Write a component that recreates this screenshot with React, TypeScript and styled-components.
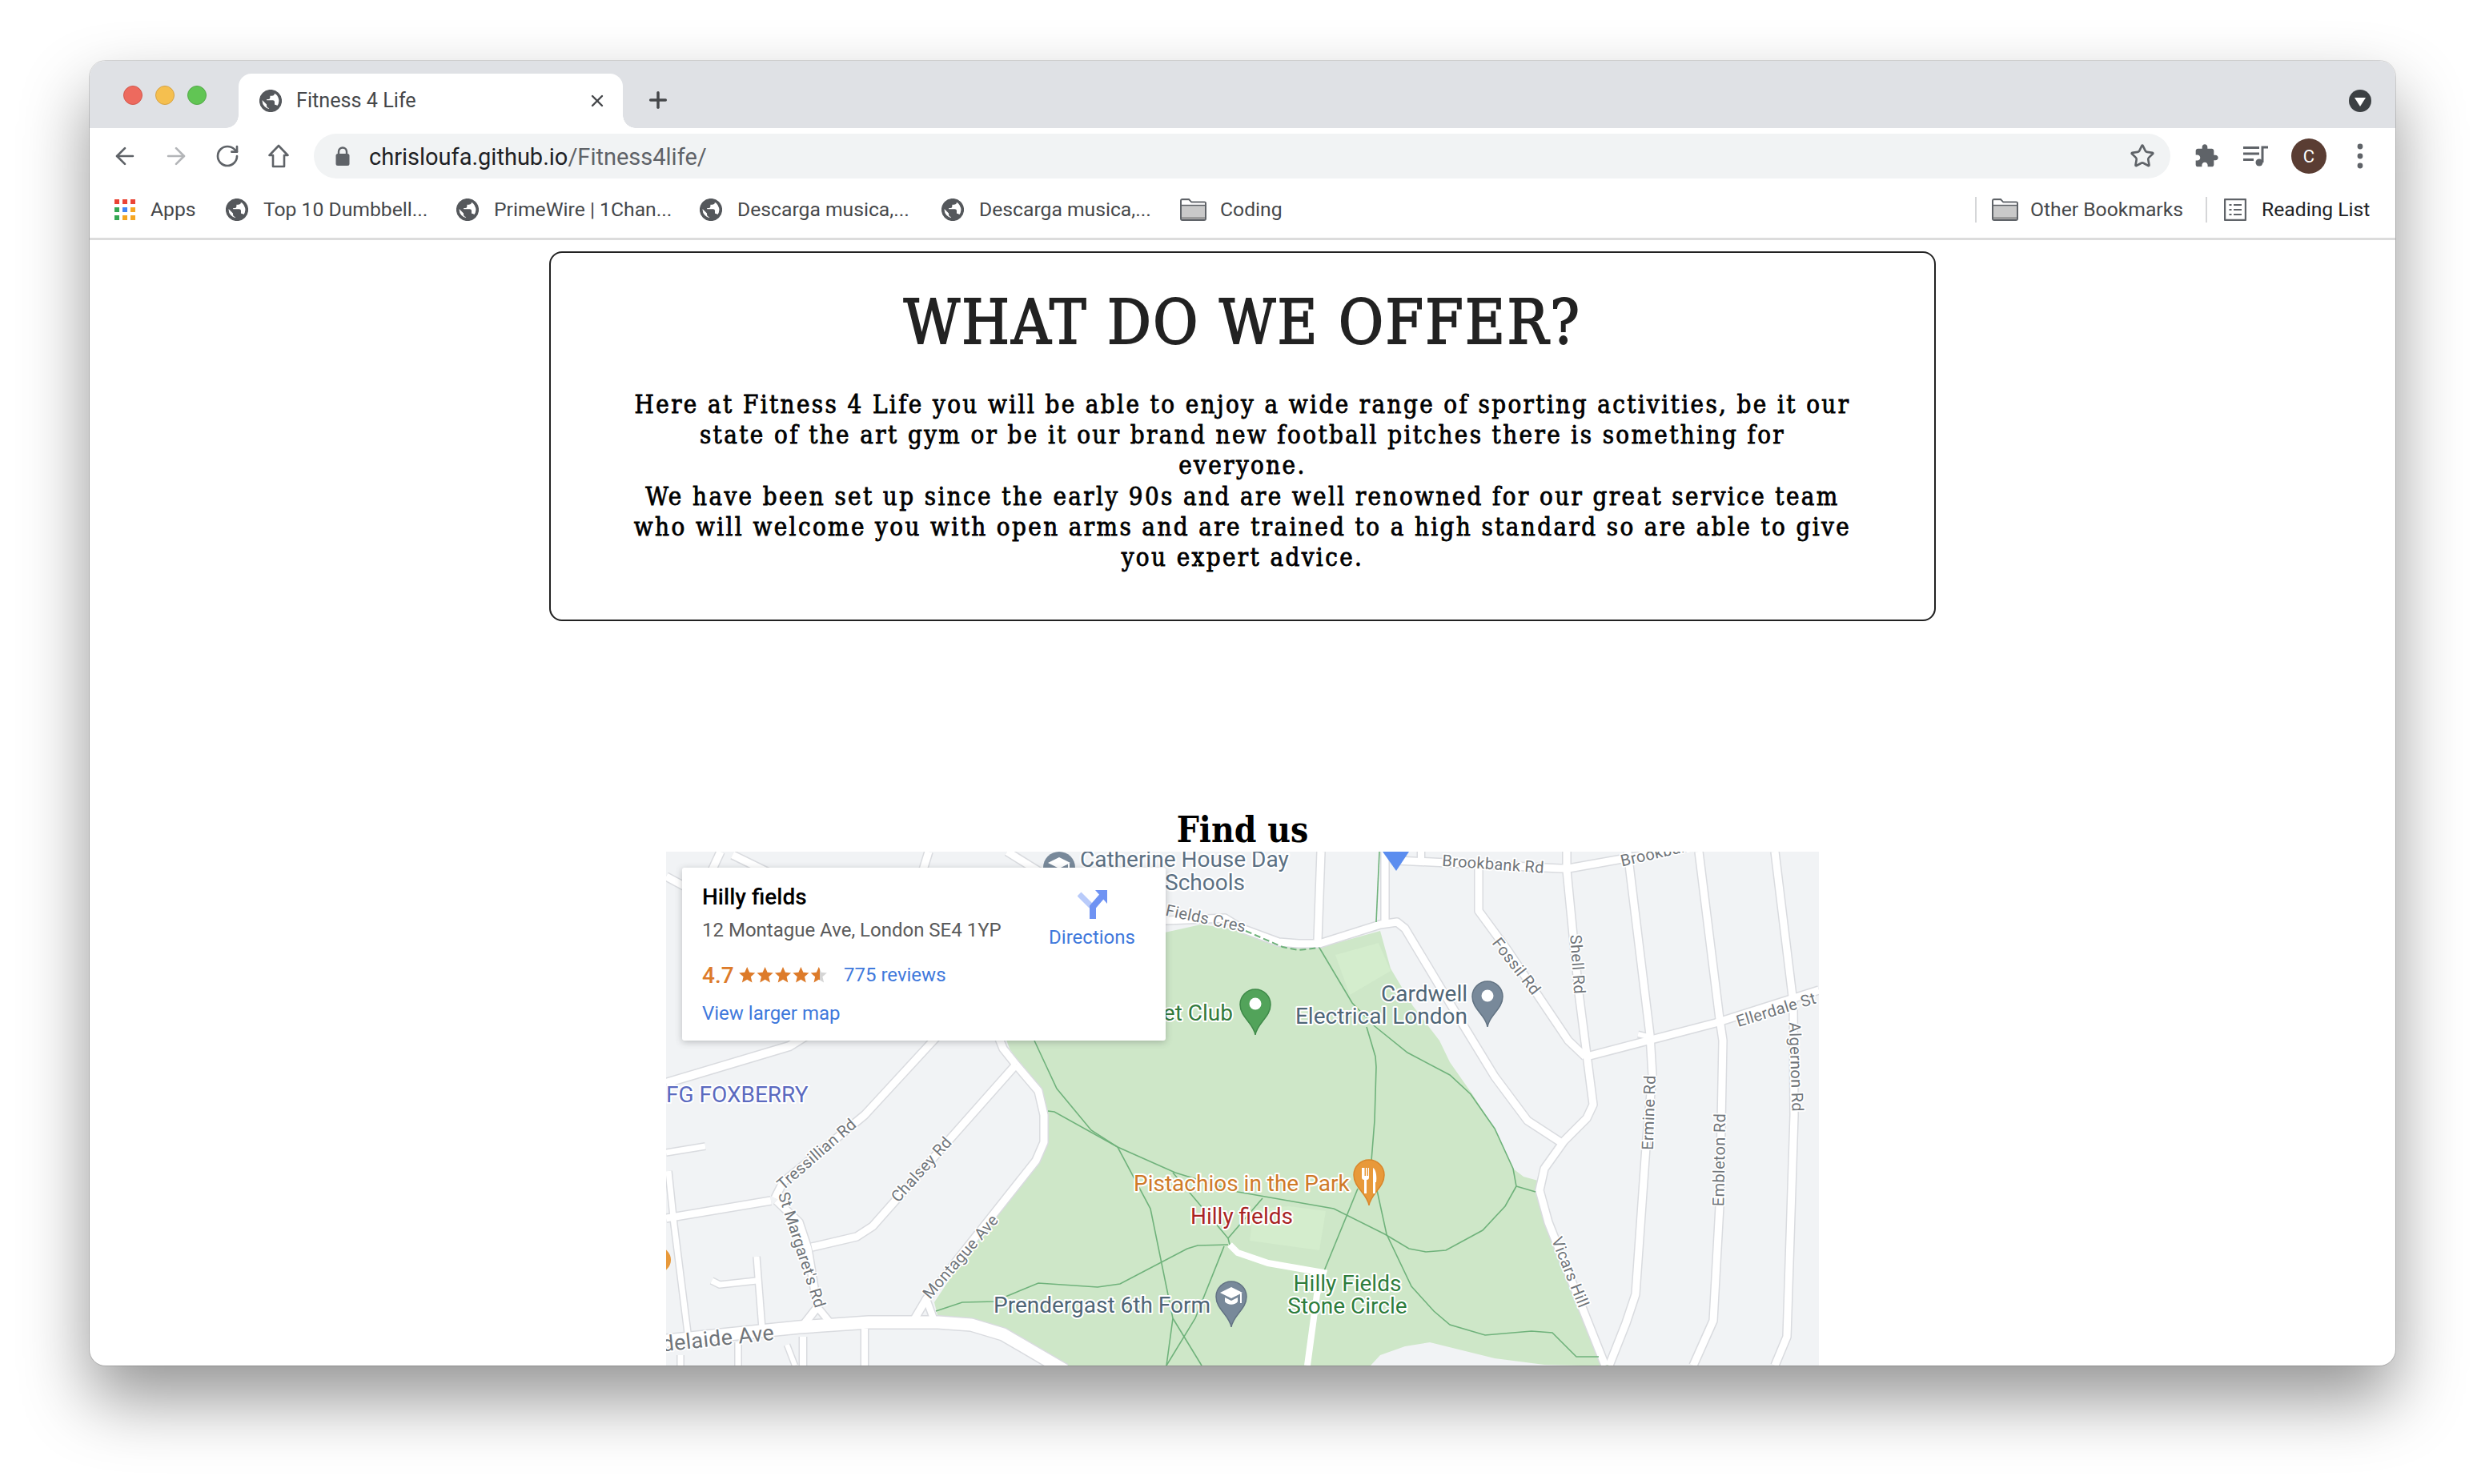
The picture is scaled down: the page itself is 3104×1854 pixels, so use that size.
import React from "react";
import styled, { createGlobalStyle } from "styled-components";
import { ArrowLeft, ArrowRight, RotateCw, Star, X, Plus } from "lucide-react";

const GlobalStyle = createGlobalStyle`
  html, body {
    margin: 0;
    padding: 0;
    background: #fff;
    width: 3104px;
    height: 1854px;
    overflow: hidden;
  }
  * { box-sizing: border-box; }
`;

const uiFont = `Roboto, "Liberation Sans", sans-serif`;
const slabFont = `"DejaVu Serif Condensed", "DejaVu Serif", serif`;

const Stage = styled.div`
  padding: 76px 0 0 112px;
`;

const BrowserWindow = styled.div`
  width: 2880px;
  height: 1630px;
  border-radius: 20px;
  overflow: hidden;
  background: #fff;
  display: flex;
  flex-direction: column;
  box-shadow: 0 0 0 1px rgba(0, 0, 0, 0.14), 0 42px 84px rgba(0, 0, 0, 0.42);
  font-family: ${uiFont};
`;

const TabStrip = styled.div`
  height: 84px;
  flex: none;
  background: #dfe1e5;
  display: flex;
  align-items: flex-end;
  padding-left: 42px;
  padding-right: 30px;
`;

const TrafficLights = styled.div`
  display: flex;
  gap: 16px;
  align-self: flex-start;
  margin-top: 31px;
  width: 144px;
`;

const Light = styled.span<{ $color: string; $edge: string }>`
  width: 24px;
  height: 24px;
  border-radius: 50%;
  background: ${(p) => p.$color};
  border: 1px solid ${(p) => p.$edge};
`;

const Tab = styled.div`
  position: relative;
  width: 480px;
  height: 68px;
  background: #fff;
  border-radius: 16px 16px 0 0;
  display: flex;
  align-items: center;
  padding: 0 20px 0 26px;
  gap: 18px;
  color: #45474a;
  font-size: 25.2px;

  &::before,
  &::after {
    content: "";
    position: absolute;
    bottom: 0;
    width: 16px;
    height: 16px;
  }
  &::before {
    left: -16px;
    background: radial-gradient(circle at 0 0, #dfe1e5 15.5px, #fff 16px);
  }
  &::after {
    right: -16px;
    background: radial-gradient(circle at 100% 0, #dfe1e5 15.5px, #fff 16px);
  }
`;

const TabTitle = styled.span`
  flex: 1;
  padding-bottom: 2px;
  white-space: nowrap;
`;

const NewTab = styled.div`
  display: flex;
  align-self: flex-start;
  margin: 33px 0 0 28px;
  color: #45474a;
`;

const StripEnd = styled.div`
  margin-left: auto;
  align-self: flex-start;
  margin-top: 36px;
  width: 28px;
  height: 28px;
  border-radius: 50%;
  background: #3c4043;
  display: flex;
  align-items: center;
  justify-content: center;

  &::after {
    content: "";
    border-left: 7px solid transparent;
    border-right: 7px solid transparent;
    border-top: 11px solid #fff;
    margin-top: 3px;
  }
`;

const Toolbar = styled.div`
  height: 76px;
  flex: none;
  display: flex;
  align-items: center;
  padding: 0 0 6px 12px;
`;

const NavIcon = styled.div<{ $color?: string; $width?: number }>`
  width: ${(p) => p.$width ?? 64}px;
  display: flex;
  justify-content: center;
  color: ${(p) => p.$color ?? "#5f6368"};
  flex: none;
`;

const Omnibox = styled.div`
  margin-left: 12px;
  width: 2319px;
  flex: none;
  height: 56px;
  border-radius: 28px;
  background: #f1f3f4;
  display: flex;
  align-items: center;
  padding: 0 19px 0 27px;
  font-size: 29px;
  color: #202124;
`;

const UrlText = styled.span`
  margin-left: 24px;
  flex: 1;
  white-space: nowrap;
  padding-top: 2px;
`;

const UrlPath = styled.span`
  color: #5f6368;
`;

const ToolIcons = styled.div`
  display: flex;
  align-items: center;
  margin-left: 14px;
`;

const Avatar = styled.div`
  width: 44px;
  height: 44px;
  border-radius: 50%;
  background: #5a3d33;
  color: #fff;
  font-size: 22px;
  display: flex;
  align-items: center;
  justify-content: center;
  margin: 0 20px 0 13px;
`;

const BookmarkBar = styled.div`
  height: 64px;
  flex: none;
  padding: 0 24px 10px 31px;
  display: flex;
  align-items: center;
  border-bottom: 3px solid #dcdcdc;
  font-size: 24.7px;
  color: #45474a;
`;

const Bookmark = styled.div<{ $width: number; $gap?: number; $inset?: number; $dark?: boolean }>`
  width: ${(p) => p.$width}px;
  flex: none;
  display: flex;
  align-items: center;
  gap: ${(p) => p.$gap ?? 17}px;
  padding-left: ${(p) => p.$inset ?? 0}px;
  white-space: nowrap;
  color: ${(p) => (p.$dark ? "#202124" : "inherit")};
`;

const BarDivider = styled.span`
  width: 2px;
  height: 32px;
  background: #d5d6d8;
  flex: none;
`;

const Push = styled.div`
  flex: 1;
`;

const PageArea = styled.main`
  flex: 1;
  min-height: 0;
  display: flex;
  flex-direction: column;
  align-items: center;
  padding-top: 14px;
`;

const OfferCard = styled.section`
  width: 1732px;
  height: 462px;
  flex: none;
  border: 2px solid #222;
  border-radius: 16px;
  text-align: center;
  font-family: ${slabFont};
`;

const OfferTitle = styled.h2`
  margin: 42px 0 0;
  font-size: 76px;
  line-height: 90px;
  font-weight: 400;
  color: #222;
  letter-spacing: 2.4px;
  -webkit-text-stroke: 1.8px #222;
`;

const OfferText = styled.p`
  margin: 38px 0 0;
  font-size: 31px;
  line-height: 38.2px;
  color: #000;
  letter-spacing: 2.4px;
  white-space: nowrap;
  -webkit-text-stroke: 0.8px #000;
`;

const FindHeading = styled.h2`
  margin: 234px 0 0;
  height: 54px;
  flex: none;
  font-family: ${slabFont};
  font-size: 44px;
  line-height: 54px;
  font-weight: 700;
  color: #000;
`;

const MapFrame = styled.div`
  position: relative;
  width: 1440px;
  flex: 1;
  min-height: 0;
  overflow: hidden;
  background: #f1f3f5;
`;

const MapDrawing = styled.svg`
  display: block;
  width: 1440px;
  height: 642px;
  font-family: ${uiFont};
`;

const PlaceLabel = styled.text<{ $color: string }>`
  fill: ${(p) => p.$color};
  font-size: 28px;
  stroke: #fff;
  stroke-width: 4px;
  stroke-linejoin: round;
  paint-order: stroke;
`;

const RoadText = styled.text<{ $size?: number }>`
  fill: #70757a;
  font-size: ${(p) => p.$size ?? 20}px;
  stroke: #fff;
  stroke-width: 3.5px;
  stroke-linejoin: round;
  paint-order: stroke;
  letter-spacing: 0.3px;
`;

const InfoCard = styled.div`
  position: absolute;
  left: 20px;
  top: 20px;
  width: 604px;
  height: 216px;
  background: #fff;
  border-radius: 3px;
  box-shadow: 0 2px 8px rgba(60, 64, 67, 0.3);
  display: flex;
  padding: 20px 20px 0 25px;
`;

const InfoMain = styled.div`
  flex: 1;
  display: flex;
  flex-direction: column;
`;

const PlaceName = styled.div`
  font-size: 28px;
  line-height: 34px;
  font-weight: 500;
  color: #000;
`;

const PlaceAddress = styled.div`
  margin-top: 9px;
  font-size: 24px;
  line-height: 30px;
  color: #5b5b5b;
`;

const RatingRow = styled.div`
  margin-top: 24px;
  display: flex;
  align-items: center;
  height: 34px;
`;

const RatingValue = styled.span`
  font-size: 28px;
  font-weight: 500;
  color: #dd7b2a;
  width: 45px;
`;

const ReviewsLink = styled.a`
  margin-left: 21px;
  font-size: 24px;
  color: #3f79dc;
`;

const LargerLink = styled.a`
  margin-top: 16px;
  font-size: 24px;
  line-height: 30px;
  color: #3f79dc;
`;

const DirectionsBox = styled.div`
  width: 146px;
  display: flex;
  flex-direction: column;
  align-items: center;
  padding-top: 8px;
  gap: 9px;
  font-size: 24px;
  color: #3f79dc;
  margin-right: -1px;
`;

type Pt = [number, number];

const toPath = (pts: Pt[]) => "M" + pts.map((p) => p.join(" ")).join("L");

const roads: { pts: Pt[]; w: number }[] = [
  { pts: [[1440, 1140], [1456, 1150], [1530, 1147], [1551, 1160], [1597, 1177], [1622, 1179], [1648, 1179], [1724, 1155], [1745, 1152], [1755, 1160], [1806, 1245], [1867, 1345], [1908, 1400], [1954, 1430]], w: 9 },
  { pts: [[1650, 1064], [1646, 1175]], w: 9 },
  { pts: [[1730, 1064], [1730, 1152]], w: 9 },
  { pts: [[1745, 1075], [1949, 1085], [1959, 1085], [2122, 1056]], w: 9 },
  { pts: [[1775, 1064], [1775, 1078]], w: 8 },
  { pts: [[1957, 1064], [1957, 1087], [1972, 1240], [1990, 1380], [1982, 1397], [1954, 1425], [1929, 1460], [1923, 1487], [1934, 1527], [2005, 1706]], w: 9 },
  { pts: [[2033, 1064], [2061, 1293], [2064, 1343], [2056, 1433], [2043, 1617], [2031, 1653], [2010, 1706]], w: 9 },
  { pts: [[2122, 1064], [2148, 1273], [2152, 1300], [2148, 1507], [2140, 1650], [2115, 1706]], w: 9 },
  { pts: [[2217, 1064], [2240, 1253], [2241, 1393], [2232, 1670], [2217, 1706]], w: 9 },
  { pts: [[1847, 1083], [1847, 1138], [1883, 1187], [1959, 1300], [1980, 1320]], w: 9 },
  { pts: [[1982, 1320], [2143, 1278], [2272, 1237]], w: 9 },
  { pts: [[2046, 1292], [2059, 1295]], w: 6 },
  { pts: [[900, 1064], [888, 1090]], w: 9 },
  { pts: [[915, 1068], [960, 1090]], w: 9 },
  { pts: [[1160, 1064], [1152, 1090]], w: 9 },
  { pts: [[1258, 1064], [1300, 1090]], w: 9 },
  { pts: [[832, 1095], [860, 1110]], w: 9 },
  { pts: [[832, 1353], [986, 1307], [1010, 1292]], w: 10 },
  { pts: [[968, 1497], [978, 1477], [1080, 1393], [1175, 1290]], w: 9 },
  { pts: [[832, 1522], [963, 1500]], w: 9 },
  { pts: [[1014, 1558], [1070, 1545], [1090, 1532], [1269, 1330]], w: 9 },
  { pts: [[1245, 1290], [1253, 1310], [1269, 1330], [1297, 1363], [1304, 1393], [1304, 1427], [1294, 1450], [1157, 1623], [1141, 1650]], w: 9 },
  { pts: [[1157, 1623], [1167, 1650]], w: 8 },
  { pts: [[970, 1500], [998, 1527], [1009, 1560], [1021, 1633], [1003, 1656]], w: 9 },
  { pts: [[1021, 1633], [1039, 1655]], w: 8 },
  { pts: [[835, 1463], [842, 1530], [860, 1673]], w: 7 },
  { pts: [[945, 1570], [952, 1660]], w: 7 },
  { pts: [[889, 1600], [899, 1605], [945, 1600]], w: 7 },
  { pts: [[832, 1440], [881, 1432]], w: 7 },
  { pts: [[1003, 1670], [1003, 1706]], w: 8 },
  { pts: [[1080, 1660], [1080, 1706]], w: 8 },
  { pts: [[922, 1677], [922, 1706]], w: 7 },
  { pts: [[850, 1693], [850, 1706]], w: 7 },
  { pts: [[983, 1680], [993, 1706]], w: 6 },
  { pts: [[832, 1675], [998, 1658], [1085, 1652], [1172, 1652], [1213, 1655], [1253, 1667], [1330, 1712]], w: 15 },
];

const parkPaths: Pt[][] = [
  [[1292, 1300], [1320, 1360], [1363, 1412], [1396, 1433], [1437, 1510], [1465, 1647], [1457, 1706]],
  [[1309, 1388], [1317, 1389], [1396, 1433], [1468, 1465], [1546, 1489], [1666, 1510], [1730, 1542], [1760, 1560], [1781, 1564], [1806, 1562], [1852, 1537], [1880, 1507], [1894, 1482], [1890, 1460], [1867, 1410], [1837, 1367], [1811, 1343], [1758, 1315], [1717, 1282], [1689, 1253], [1648, 1184]],
  [[1707, 1283], [1718, 1320], [1719, 1333], [1717, 1400], [1713, 1450]],
  [[1720, 1487], [1732, 1542], [1763, 1607], [1791, 1638], [1811, 1655], [1855, 1668], [1913, 1663], [1939, 1665], [1969, 1695], [1997, 1695]],
  [[1696, 1485], [1653, 1590]],
  [[1894, 1482], [1918, 1489]],
  [[1465, 1647], [1501, 1706]],
  [[1529, 1557], [1493, 1647], [1457, 1706]],
  [[1169, 1638], [1202, 1627], [1243, 1626], [1256, 1620], [1297, 1603], [1371, 1608], [1399, 1604], [1483, 1560], [1496, 1556], [1534, 1555]],
  [[1465, 1465], [1534, 1547], [1536, 1555]],
  [[1577, 1497], [1534, 1547]],
  [[1723, 1064], [1719, 1152]],
];

const parkOutline: Pt[] = [
  [1455, 1165], [1500, 1155], [1556, 1163], [1602, 1183], [1648, 1184], [1724, 1163], [1737, 1210], [1765, 1257], [1798, 1300], [1811, 1327], [1839, 1367], [1867, 1410], [1890, 1460], [1903, 1470], [1921, 1475], [1918, 1490], [1934, 1530], [2000, 1693], [2010, 1706],
  [1974, 1706], [1929, 1705], [1867, 1697], [1786, 1677], [1755, 1682], [1724, 1693], [1712, 1706],
  [1325, 1706], [1253, 1662], [1213, 1648], [1172, 1647], [1167, 1627], [1243, 1513], [1299, 1447], [1309, 1423], [1309, 1393], [1292, 1357], [1261, 1310], [1250, 1280], [1300, 1200],
];

const GlobeIcon = () => (
  <svg width="28" height="28" viewBox="0 0 16 16">
    <path
      fill="#55585c"
      stroke="#55585c"
      strokeWidth="0.9"
      fillRule="evenodd"
      d="M8 .4a7.6 7.6 0 1 0 0 15.2A7.6 7.6 0 0 0 8 .4zM7.2 14.3A6.4 6.4 0 0 1 1.6 8c0-.5.06-.97.17-1.43L5.6 10.4v.8c0 .88.72 1.6 1.6 1.6v1.5zm5.5-2a1.6 1.6 0 0 0-1.5-1.1h-.8V8.8a.8.8 0 0 0-.8-.8H4.8V6.4h1.6a.8.8 0 0 0 .8-.8V4h1.6c.88 0 1.6-.72 1.6-1.6v-.33a6.4 6.4 0 0 1 2.3 10.23z"
    />
  </svg>
);

const FolderIcon = () => (
  <svg width="33" height="28" viewBox="0 0 33 28">
    <path d="M1 5V25a2 2 0 0 0 2 2H30a2 2 0 0 0 2-2V6a1.5 1.5 0 0 0-1.5-1.5H14L11 1H3a2 2 0 0 0-2 2z" fill="#c9c9c9" stroke="#5f6368" strokeWidth="2" />
    <path d="M2 2.5h9l3 3h17v3H2z" fill="#fff" />
    <path d="M2 8.5h29" stroke="#5f6368" strokeWidth="1.5" />
    <path d="M2 23h29v3H2z" fill="#9b9b9b" />
  </svg>
);

const AppsIcon = () => {
  const colors = ["#ea4335", "#ea4335", "#ea4335", "#34a853", "#4285f4", "#f5a623", "#34a853", "#f5a623", "#f5a623"];
  return (
    <svg width="26" height="26" viewBox="0 0 26 26">
      {colors.map((c, i) => (
        <rect key={i} x={(i % 3) * 10} y={Math.floor(i / 3) * 10} width="6" height="6" fill={c} />
      ))}
    </svg>
  );
};

const ListIcon = () => (
  <svg width="28" height="28" viewBox="0 0 28 28" fill="none" stroke="#5f6368" strokeWidth="2">
    <rect x="1" y="1" width="26" height="26" rx="1" strokeWidth="2.4" />
    <path d="M6.5 8h3M12 8h10M6.5 14h3M12 14h10M6.5 20h3M12 20h10" strokeWidth="2" />
  </svg>
);

const HomeIcon = () => (
  <svg width="28" height="32" viewBox="0 0 28 32" fill="none" stroke="#5f6368" strokeWidth="2.6">
    <path d="M14 3L2.5 15H7V29H21V15H25.5z" strokeLinejoin="round" />
  </svg>
);

const LockIcon = () => (
  <svg width="18" height="24" viewBox="0 0 18 24">
    <path d="M4 10V6.5a5 5 0 0 1 10 0V10" fill="none" stroke="#5f6368" strokeWidth="2.4" />
    <rect x="0.5" y="9" width="17" height="15" rx="2.5" fill="#5f6368" />
  </svg>
);

const PuzzleIcon = () => (
  <svg width="32" height="32" viewBox="0 0 24 24" fill="#5f6368">
    <path d="M20.5 11H19V7c0-1.1-.9-2-2-2h-4V3.5C13 2.12 11.88 1 10.5 1S8 2.12 8 3.5V5H4c-1.1 0-1.99.9-1.99 2v3.8H3.5c1.49 0 2.7 1.21 2.7 2.7s-1.21 2.7-2.7 2.7H2V20c0 1.1.9 2 2 2h3.8v-1.5c0-1.49 1.21-2.7 2.7-2.7 1.49 0 2.7 1.21 2.7 2.7V22H17c1.1 0 2-.9 2-2v-4h1.5c1.38 0 2.5-1.12 2.5-2.5S21.88 11 20.5 11z" />
  </svg>
);

const MediaIcon = () => (
  <svg width="32" height="26" viewBox="0 0 32 26" fill="none" stroke="#5f6368" strokeWidth="3">
    <path d="M0 2.5H20M0 10H20M0 17.5H13M24 21V2H31" />
    <circle cx="20" cy="21" r="4.5" fill="#5f6368" stroke="none" />
  </svg>
);

const MoreIcon = () => (
  <svg width="8" height="36" viewBox="0 0 8 36" fill="#5f6368">
    <circle cx="4" cy="6" r="3.4" />
    <circle cx="4" cy="18" r="3.4" />
    <circle cx="4" cy="30" r="3.4" />
  </svg>
);

const DirectionsIcon = () => (
  <svg width="37" height="36" viewBox="0 0 37 36">
    <path d="M2 5L17 20" stroke="#b9cbfa" strokeWidth="7" fill="none" />
    <path d="M19 36V21L31 7" stroke="#6f93f3" strokeWidth="8" fill="none" />
    <path d="M22 0H37V17z" fill="#6f93f3" />
  </svg>
);

const starPoints = "8 0.8 10.1 5.6 15.2 6.1 11.3 9.5 12.5 14.6 8 12 3.5 14.6 4.7 9.5 0.8 6.1 5.9 5.6";

const RatingStars = () => (
  <svg width="111" height="22" viewBox="0 0 111 22">
    <defs>
      <linearGradient id="partStar">
        <stop offset="58%" stopColor="#dd7b2a" />
        <stop offset="58%" stopColor="#d5d5d5" />
      </linearGradient>
    </defs>
    {[0, 1, 2, 3, 4].map((i) => (
      <g key={i} transform={`translate(${i * 22.4} 0) scale(1.4)`}>
        <polygon points={starPoints} fill={i === 4 ? "url(#partStar)" : "#dd7b2a"} />
      </g>
    ))}
  </svg>
);

const Pin = ({ x, y, color, edge, children }: { x: number; y: number; color: string; edge: string; children?: React.ReactNode }) => (
  <g transform={`translate(${x} ${y})`}>
    <path d="M0 57C-2 42 -19 35 -19 19A19 19 0 1 1 19 19C19 35 2 42 0 57Z" fill={color} stroke={edge} strokeWidth="1.5" />
    {children}
  </g>
);

const CapGlyph = () => (
  <g fill="#fff">
    <path d="M0 7L14 14L0 21L-14 14Z" />
    <path d="M-8 20V25C-5 30 5 30 8 25V20L0 24Z" />
    <path d="M11 15h2v12h-2z" />
  </g>
);

const RoadLabel = ({ x, y, rot, size, children }: { x: number; y: number; rot: number; size?: number; children: string }) => (
  <RoadText $size={size} textAnchor="middle" dominantBaseline="middle" transform={`translate(${x} ${y}) rotate(${rot})`}>
    {children}
  </RoadText>
);

const MapArt = () => (
  <MapDrawing viewBox="832 1064 1440 642">
    <rect x="832" y="1064" width="1440" height="642" fill="#f1f3f5" />
    <polygon points={parkOutline.map((p) => p.join(",")).join(" ")} fill="#cee7c8" />
    <polygon points="1668,1193 1722,1178 1737,1213 1686,1243" fill="#d4edcd" />
    <polygon points="1610,1507 1656,1513 1648,1562 1561,1550 1566,1510" fill="#d4edcd" />

    {roads.map((r, i) => (
      <path key={i} d={toPath(r.pts)} fill="none" stroke="#d9dbdf" strokeWidth={r.w + 3} strokeLinejoin="round" />
    ))}
    {roads.map((r, i) => (
      <path key={i} d={toPath(r.pts)} fill="none" stroke="#fff" strokeWidth={r.w} strokeLinejoin="round" />
    ))}

    {parkPaths.map((pts, i) => (
      <path key={i} d={toPath(pts)} fill="none" stroke="#6fb27b" strokeWidth="1.6" />
    ))}
    <path d="M1556 1163L1602 1183L1622 1187L1648 1184" fill="none" stroke="#6fb27b" strokeWidth="2" strokeDasharray="8 4" />
    <path d="M1536 1555L1546 1565L1584 1578L1653 1590L1645 1617L1633 1706" fill="none" stroke="#fff" strokeWidth="8" />

    <RoadLabel x={1865} y={1081} rot={4}>Brookbank Rd</RoadLabel>
    <RoadLabel x={2087} y={1063} rot={-13}>Brookbank Rd</RoadLabel>
    <RoadLabel x={1506} y={1149} rot={12}>Fields Cres</RoadLabel>
    <RoadLabel x={1893} y={1208} rot={52}>Fossil Rd</RoadLabel>
    <RoadLabel x={1969} y={1205} rot={86}>Shell Rd</RoadLabel>
    <RoadLabel x={2219} y={1263} rot={-17}>Ellerdale St</RoadLabel>
    <RoadLabel x={2242} y={1333} rot={88}>Algernon Rd</RoadLabel>
    <RoadLabel x={2061} y={1390} rot={-88}>Ermine Rd</RoadLabel>
    <RoadLabel x={2149} y={1449} rot={-89}>Embleton Rd</RoadLabel>
    <RoadLabel x={1960} y={1590} rot={68}>Vicars Hill</RoadLabel>
    <RoadLabel x={1021} y={1443} rot={-41}>Tressillian Rd</RoadLabel>
    <RoadLabel x={1152} y={1462} rot={-48}>Chalsey Rd</RoadLabel>
    <RoadLabel x={1000} y={1562} rot={72}>St Margaret's Rd</RoadLabel>
    <RoadLabel x={1201} y={1571} rot={-49}>Montague Ave</RoadLabel>
    <RoadLabel x={888} y={1675} rot={-6} size={27}>Adelaide Ave</RoadLabel>

    <circle cx="1323" cy="1084" r="20" fill="#78899a" />
    <g transform="translate(1323 1064)"><CapGlyph /></g>
    <PlaceLabel $color="#5b7083" x="1349" y="1083">Catherine House Day</PlaceLabel>
    <PlaceLabel $color="#5b7083" x="1505" y="1112" textAnchor="middle">Schools</PlaceLabel>
    <PlaceLabel $color="#5b6abf" x="832" y="1377">FG FOXBERRY</PlaceLabel>
    <PlaceLabel $color="#327a3c" x="1540" y="1275" textAnchor="end">et Club</PlaceLabel>
    <Pin x={1568} y={1236} color="#52a35a" edge="#3f8a49"><circle cy="18" r="7.5" fill="#fff" /></Pin>
    <PlaceLabel $color="#4f6677" x="1833" y="1251" textAnchor="end">Cardwell</PlaceLabel>
    <PlaceLabel $color="#4f6677" x="1833" y="1279" textAnchor="end">Electrical London</PlaceLabel>
    <Pin x={1858} y={1226} color="#78899a" edge="#627383"><circle cy="18" r="7.5" fill="#fff" /></Pin>
    <PlaceLabel $color="#cf7a28" x="1416" y="1488">Pistachios in the Park</PlaceLabel>
    <Pin x={1710} y={1449} color="#e8993a" edge="#d9862a">
      <path d="M-9 10V22a3 3 0 0 0 3 3V42h3V25a3 3 0 0 0 3-3V10H-1V20H-2.5V10H-4V20H-5.5V10Z" fill="#fff" />
      <path d="M5 10C9 12 10 22 9 28H8V42H5Z" fill="#fff" />
    </Pin>
    <PlaceLabel $color="#a82424" x="1487" y="1529">Hilly fields</PlaceLabel>
    <PlaceLabel $color="#4f6677" x="1241" y="1640">Prendergast 6th Form</PlaceLabel>
    <Pin x={1538} y={1601} color="#78899a" edge="#627383"><CapGlyph /></Pin>
    <PlaceLabel $color="#2e7d3c" x="1683" y="1613" textAnchor="middle">Hilly Fields</PlaceLabel>
    <PlaceLabel $color="#2e7d3c" x="1683" y="1641" textAnchor="middle">Stone Circle</PlaceLabel>
    <polygon points="1727,1064 1760,1064 1744,1088" fill="#5b8def" />
    <circle cx="822" cy="1574" r="16" fill="#e8993a" />
  </MapDrawing>
);

export default function App() {
  return (
    <>
      <GlobalStyle />
      <Stage>
        <BrowserWindow>
          <TabStrip>
            <TrafficLights>
              <Light $color="#ed6a5e" $edge="#d2574c" />
              <Light $color="#f5bf4f" $edge="#d6a243" />
              <Light $color="#61c554" $edge="#53a848" />
            </TrafficLights>
            <Tab>
              <GlobeIcon />
              <TabTitle>Fitness 4 Life</TabTitle>
              <X size={24} strokeWidth={2.4} />
            </Tab>
            <NewTab>
              <Plus size={32} strokeWidth={2.6} />
            </NewTab>
            <StripEnd />
          </TabStrip>

          <Toolbar>
            <NavIcon><ArrowLeft size={34} strokeWidth={1.9} /></NavIcon>
            <NavIcon $color="#b3b5b8"><ArrowRight size={34} strokeWidth={1.9} /></NavIcon>
            <NavIcon><RotateCw size={32} strokeWidth={2} /></NavIcon>
            <NavIcon><HomeIcon /></NavIcon>
            <Omnibox>
              <LockIcon />
              <UrlText>chrisloufa.github.io<UrlPath>/Fitness4life/</UrlPath></UrlText>
              <Star size={32} strokeWidth={2} color="#5f6368" />
            </Omnibox>
            <ToolIcons>
              <NavIcon $width={62}><PuzzleIcon /></NavIcon>
              <NavIcon $width={62}><MediaIcon /></NavIcon>
              <Avatar>C</Avatar>
              <NavIcon $width={44}><MoreIcon /></NavIcon>
            </ToolIcons>
          </Toolbar>

          <BookmarkBar>
            <Bookmark $width={139} $gap={19}><AppsIcon />Apps</Bookmark>
            <Bookmark $width={288} $gap={19}><GlobeIcon />Top 10 Dumbbell...</Bookmark>
            <Bookmark $width={304} $gap={19}><GlobeIcon />PrimeWire | 1Chan...</Bookmark>
            <Bookmark $width={302} $gap={19}><GlobeIcon />Descarga musica,...</Bookmark>
            <Bookmark $width={298} $gap={19}><GlobeIcon />Descarga musica,...</Bookmark>
            <Bookmark $width={150}><FolderIcon />Coding</Bookmark>
            <Push />
            <BarDivider />
            <Bookmark $width={286} $gap={15} $inset={19}><FolderIcon />Other Bookmarks</Bookmark>
            <BarDivider />
            <Bookmark $width={211} $gap={19} $inset={21} $dark><ListIcon />Reading List</Bookmark>
          </BookmarkBar>

          <PageArea>
            <OfferCard>
              <OfferTitle>WHAT DO WE OFFER?</OfferTitle>
              <OfferText>
                Here at Fitness 4 Life you will be able to enjoy a wide range of sporting activities, be it our<br />
                state of the art gym or be it our brand new football pitches there is something for<br />
                everyone.<br />
                We have been set up since the early 90s and are well renowned for our great service team<br />
                who will welcome you with open arms and are trained to a high standard so are able to give<br />
                you expert advice.
              </OfferText>
            </OfferCard>
            <FindHeading>Find us</FindHeading>
            <MapFrame>
              <MapArt />
              <InfoCard>
                <InfoMain>
                  <PlaceName>Hilly fields</PlaceName>
                  <PlaceAddress>12 Montague Ave, London SE4 1YP</PlaceAddress>
                  <RatingRow>
                    <RatingValue>4.7</RatingValue>
                    <RatingStars />
                    <ReviewsLink>775 reviews</ReviewsLink>
                  </RatingRow>
                  <LargerLink>View larger map</LargerLink>
                </InfoMain>
                <DirectionsBox>
                  <DirectionsIcon />
                  Directions
                </DirectionsBox>
              </InfoCard>
            </MapFrame>
          </PageArea>
        </BrowserWindow>
      </Stage>
    </>
  );
}
